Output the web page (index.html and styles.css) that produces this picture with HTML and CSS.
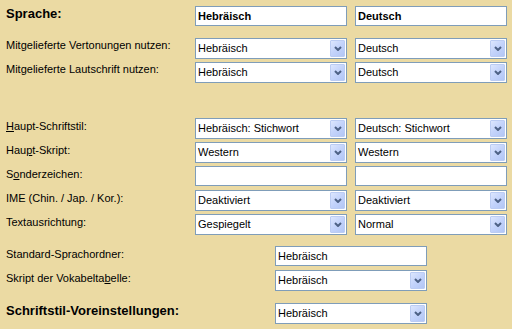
FILE: index.html
```html
<!DOCTYPE html>
<html lang="de">
<head>
<meta charset="utf-8">
<title>Sprache</title>
<link rel="stylesheet" href="styles.css">
</head>
<body>
<div class="form">
  <div class="row r1">
    <div class="label heading">Sprache:</div>
    <div class="field input bold">Hebräisch</div>
    <div class="field input bold">Deutsch</div>
  </div>
  <div class="row r2">
    <div class="label top">Mitgelieferte Vertonungen nutzen:</div>
    <div class="field select"><span>Hebräisch</span><span class="btn"><svg width="8" height="5" viewBox="0 0 8 5"><path d="M1 1 L4 4 L7 1" fill="none" stroke="#4D6185" stroke-width="2"/></svg></span></div>
    <div class="field select"><span>Deutsch</span><span class="btn"><svg width="8" height="5" viewBox="0 0 8 5"><path d="M1 1 L4 4 L7 1" fill="none" stroke="#4D6185" stroke-width="2"/></svg></span></div>
  </div>
  <div class="row r3">
    <div class="label top">Mitgelieferte Lautschrift nutzen:</div>
    <div class="field select"><span>Hebräisch</span><span class="btn"><svg width="8" height="5" viewBox="0 0 8 5"><path d="M1 1 L4 4 L7 1" fill="none" stroke="#4D6185" stroke-width="2"/></svg></span></div>
    <div class="field select"><span>Deutsch</span><span class="btn"><svg width="8" height="5" viewBox="0 0 8 5"><path d="M1 1 L4 4 L7 1" fill="none" stroke="#4D6185" stroke-width="2"/></svg></span></div>
  </div>
  <div class="row r4">
    <div class="label"><u>H</u>aupt-Schriftstil:</div>
    <div class="field select"><span>Hebräisch: Stichwort</span><span class="btn"><svg width="8" height="5" viewBox="0 0 8 5"><path d="M1 1 L4 4 L7 1" fill="none" stroke="#4D6185" stroke-width="2"/></svg></span></div>
    <div class="field select"><span>Deutsch: Stichwort</span><span class="btn"><svg width="8" height="5" viewBox="0 0 8 5"><path d="M1 1 L4 4 L7 1" fill="none" stroke="#4D6185" stroke-width="2"/></svg></span></div>
  </div>
  <div class="row r5">
    <div class="label">Hau<u>p</u>t-Skript:</div>
    <div class="field select"><span>Western</span><span class="btn"><svg width="8" height="5" viewBox="0 0 8 5"><path d="M1 1 L4 4 L7 1" fill="none" stroke="#4D6185" stroke-width="2"/></svg></span></div>
    <div class="field select"><span>Western</span><span class="btn"><svg width="8" height="5" viewBox="0 0 8 5"><path d="M1 1 L4 4 L7 1" fill="none" stroke="#4D6185" stroke-width="2"/></svg></span></div>
  </div>
  <div class="row r6">
    <div class="label">S<u>o</u>nderzeichen:</div>
    <div class="field input"></div>
    <div class="field input"></div>
  </div>
  <div class="row r7">
    <div class="label">IME (Chin. / Jap. / Kor.):</div>
    <div class="field select"><span>Deaktiviert</span><span class="btn"><svg width="8" height="5" viewBox="0 0 8 5"><path d="M1 1 L4 4 L7 1" fill="none" stroke="#4D6185" stroke-width="2"/></svg></span></div>
    <div class="field select"><span>Deaktiviert</span><span class="btn"><svg width="8" height="5" viewBox="0 0 8 5"><path d="M1 1 L4 4 L7 1" fill="none" stroke="#4D6185" stroke-width="2"/></svg></span></div>
  </div>
  <div class="row r8">
    <div class="label">Textausrichtung:</div>
    <div class="field select"><span>Gespiegelt</span><span class="btn"><svg width="8" height="5" viewBox="0 0 8 5"><path d="M1 1 L4 4 L7 1" fill="none" stroke="#4D6185" stroke-width="2"/></svg></span></div>
    <div class="field select"><span>Normal</span><span class="btn"><svg width="8" height="5" viewBox="0 0 8 5"><path d="M1 1 L4 4 L7 1" fill="none" stroke="#4D6185" stroke-width="2"/></svg></span></div>
  </div>
  <div class="row r9">
    <div class="label wide">Standard-Sprachordner:</div>
    <div class="field input">Hebräisch</div>
  </div>
  <div class="row r10">
    <div class="label wide">Skript der Vokabelta<u>b</u>elle:</div>
    <div class="field select"><span>Hebräisch</span><span class="btn"><svg width="8" height="5" viewBox="0 0 8 5"><path d="M1 1 L4 4 L7 1" fill="none" stroke="#4D6185" stroke-width="2"/></svg></span></div>
  </div>
  <div class="row r11">
    <div class="label wide heading">Schriftstil-Voreinstellungen:</div>
    <div class="field select"><span>Hebräisch</span><span class="btn"><svg width="8" height="5" viewBox="0 0 8 5"><path d="M1 1 L4 4 L7 1" fill="none" stroke="#4D6185" stroke-width="2"/></svg></span></div>
  </div>
</div>
</body>
</html>
```
FILE: styles.css
```css
* { box-sizing: border-box; }

html, body {
  margin: 0;
  padding: 0;
}

body {
  width: 512px;
  height: 329px;
  overflow: hidden;
  background: #EBDAA3;
  font-family: "Liberation Sans", Arial, sans-serif;
  font-size: 11px;
  color: #000;
}

.form {
  padding: 6px 0 0 6px;
}

.row {
  display: flex;
  align-items: flex-start;
}

.r2 { margin-top: 12px; }
.r3 { margin-top: 3px; }
.r4 { margin-top: 35px; }
.r5 { margin-top: 3px; }
.r6 { margin-top: 3px; }
.r7 { margin-top: 4px; }
.r8 { margin-top: 3px; }
.r9 { margin-top: 11px; }
.r10 { margin-top: 4px; }
.r11 { margin-top: 12px; }

.label {
  width: 189px;
  flex: none;
  line-height: 13px;
  padding-top: 2px;
  white-space: nowrap;
}

.label.top { padding-top: 1px; }

.label.wide { width: 269px; }

.label.heading {
  font-size: 13px;
  font-weight: bold;
  line-height: 15px;
  padding-top: 0;
}

.field {
  width: 152px;
  flex: none;
  height: 21px;
  border: 1px solid #7F9DB9;
  background: #fff;
  display: flex;
  align-items: center;
  padding-left: 2px;
  line-height: 13px;
  white-space: nowrap;
  overflow: hidden;
}

.field + .field { margin-left: 8px; }

.input { height: 20px; }

.bold { font-weight: bold; }

.select {
  justify-content: space-between;
  padding-right: 1px;
}

.btn {
  width: 15px;
  height: 17px;
  flex: none;
  display: flex;
  align-items: center;
  justify-content: center;
  border: 1px solid #BBCCF3;
  border-radius: 1px;
  background: linear-gradient(135deg, #DCE6FD 0%, #C3D3FB 50%, #B2C6F5 100%);
}

.btn svg { display: block; }
```
